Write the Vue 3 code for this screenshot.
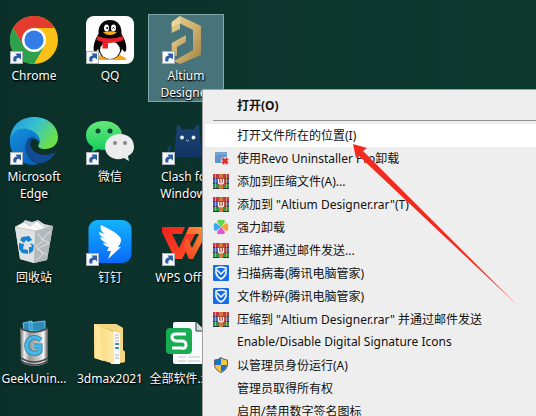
<script setup>
const shortcuts = [
  { icon: 'chrome', label: 'Chrome', linked: true },
  { icon: 'qq', label: 'QQ', linked: true },
  { icon: 'altium', label: 'Altium Designer', linked: true, selected: true },
  { icon: 'edge', label: 'Microsoft Edge', linked: true },
  { icon: 'wechat', label: '微信', linked: true },
  { icon: 'clash', label: 'Clash for Windows', linked: true },
  { icon: 'bin', label: '回收站' },
  { icon: 'ding', label: '钉钉', linked: true },
  { icon: 'wps', label: 'WPS Office', linked: true },
  { icon: 'geek', label: 'GeekUnin...' },
  { icon: 'folder', label: '3dmax2021' },
  { icon: 'sheet', label: '全部软件.xlsx' },
]

const commands = [
  { label: '打开文件所在的位置(I)', active: true },
  { label: '使用Revo Uninstaller Pro卸载', icon: 'revo' },
  { label: '添加到压缩文件(A)...', icon: 'rar' },
  { label: '添加到 "Altium Designer.rar"(T)', icon: 'rar' },
  { label: '强力卸载', icon: 'clover' },
  { label: '压缩并通过邮件发送...', icon: 'rar' },
  { label: '扫描病毒(腾讯电脑管家)', icon: 'guard' },
  { label: '文件粉碎(腾讯电脑管家)', icon: 'guard' },
  { label: '压缩到 "Altium Designer.rar" 并通过邮件发送', icon: 'rar' },
  { label: 'Enable/Disable Digital Signature Icons' },
  { label: '以管理员身份运行(A)', icon: 'shield' },
  { label: '管理员取得所有权' },
  { label: '启用/禁用数字签名图标' },
]
</script>

<template>
  <main class="desktop">
    <svg class="defs" aria-hidden="true">
      <defs>
        <linearGradient id="gold" x1="0" y1="0" x2="1" y2="1"><stop offset="0" stop-color="#e5cd8c" /><stop offset=".5" stop-color="#cfb170" /><stop offset="1" stop-color="#a08144" /></linearGradient>
        <linearGradient id="edgeTop" x1="0" y1="0" x2="1" y2=".5"><stop offset="0" stop-color="#2392d8" /><stop offset=".5" stop-color="#35bfd3" /><stop offset="1" stop-color="#6ae04c" /></linearGradient>
        <linearGradient id="edgeLeft" x1="0" y1="0" x2=".5" y2="1"><stop offset="0" stop-color="#1591de" /><stop offset="1" stop-color="#0966bd" /></linearGradient>
        <linearGradient id="wx" x2="0" y2="1"><stop offset="0" stop-color="#66e679" /><stop offset="1" stop-color="#12cf5c" /></linearGradient>
        <linearGradient id="cat" x2="0" y2="1"><stop offset="0" stop-color="#1c4476" /><stop offset="1" stop-color="#123463" /></linearGradient>
        <linearGradient id="dd" x2="0" y2="1"><stop offset="0" stop-color="#12b4fb" /><stop offset="1" stop-color="#0869fa" /></linearGradient>
        <linearGradient id="wpsA" x1="0" y1="0" x2="1" y2="1"><stop offset="0" stop-color="#f11f1e" /><stop offset="1" stop-color="#ff5425" /></linearGradient>
        <linearGradient id="wpsB" x1="1" y1="0" x2="0" y2="1"><stop offset="0" stop-color="#ff9a3d" /><stop offset="1" stop-color="#f23c20" /></linearGradient>
        <linearGradient id="metal"><stop offset="0" stop-color="#666" /><stop offset=".16" stop-color="#eee" /><stop offset=".34" stop-color="#999" /><stop offset=".68" stop-color="#ccc" /><stop offset=".84" stop-color="#f5f5f5" /><stop offset="1" stop-color="#555" /></linearGradient>
        <linearGradient id="fold"><stop offset="0" stop-color="#f5d678" /><stop offset="1" stop-color="#ffeaa5" /></linearGradient>
      </defs>
    </svg>

    <section class="icons" aria-label="Desktop">
      <button v-for="item in shortcuts" :key="item.icon" type="button" class="tile" :class="{ selected: item.selected }">
        <svg class="picture" viewBox="0 0 48 48" aria-hidden="true">
          <g v-if="item.icon === 'chrome'">
            <circle cx="24" cy="24" r="24" fill="#fbc116" />
            <path d="M24 24V12H44.8A24 24 0 0 0 3.2 12L13.6 30Z" fill="#e33b2e" />
            <path d="M3.2 12A24 24 0 0 0 24 48L34.4 30 24 24 13.6 30Z" fill="#2da14c" />
            <circle cx="24" cy="24" r="12" fill="#fff" /><circle cx="24" cy="24" r="9.6" fill="#347de9" />
          </g>
          <g v-else-if="item.icon === 'qq'">
            <rect width="48" height="48" rx="8" fill="#fff" />
            <path d="M14 39Q5 44 12 44H24V41ZM34 39Q45 44 37 44H24V41Z" fill="#f7a814" />
            <path d="M24 4C16 4 12 10 12.500 18C8 25 7 31 8 35Q9.500 37 12 33C14 40 18 43 24 43S34 40 36 33Q38.500 37 40 35C41 31 40 25 35.500 18C36 10 32 4 24 4Z" fill="#080808" />
            <ellipse cx="24" cy="34" rx="10" ry="9" fill="#fff" />
            <ellipse cx="20.500" cy="12" rx="2.500" ry="3.500" fill="#fff" /><ellipse cx="27.500" cy="12" rx="2.500" ry="3.500" fill="#fff" />
            <circle cx="21.200" cy="12" r="1" /><path d="M26.300 12.500Q27.500 10.500 28.700 12.500" stroke="#111" fill="none" />
            <path d="M17 16.500Q24 14 31 16.500Q24 21.500 17 16.500Z" fill="#f9ae15" />
            <path d="M11.500 20Q24 25 36.500 20L37.500 24Q30 27.500 22 27V32.500H16.500V26L10.500 24Z" fill="#eb2029" />
          </g>
          <g v-else-if="item.icon === 'altium'">
            <path d="M18 0L39 10V39L18 48L12 45L31 34V14L18 7.500V13L9.700 17V6Z" fill="url(#gold)" />
            <path d="M9.700 27L24 19V26L15 31V40H9.700Z" fill="url(#gold)" />
            <path d="M18 0V7.500L9.700 11V6Z" fill="#eedba2" opacity=".7" />
          </g>
          <g v-else-if="item.icon === 'edge'">
            <path d="M0 25C0 9 10 0 24 0C39 0 48 10 48 20C48 28 42 32 35 32C30 32 27 30 29 27C31 23 28 17 20 15C11 12 3 17 0 25Z" fill="url(#edgeTop)" />
            <path d="M0 25C1 15 9 10 17 12C26 14 31 20 29 26C27 18 16 21 16 31C16 39 21 45 29 47C14 51 0 40 0 25Z" fill="url(#edgeLeft)" />
            <path d="M18 22C10 33 20 48 33 46C39 44 43 40 45 36Q44 35 41 37C34 39 26 38 22 32C19 28 20 22 25 20Q21 19 18 22Z" fill="#124b93" />
          </g>
          <g v-else-if="item.icon === 'wechat'">
            <path d="M18 4C7 4 0 10 0 18C0 23 2 27 7 30L6 35L12 32Q15 33 20 33C29 32 36 26 36 18C36 10 28 4 18 4Z" fill="url(#wx)" />
            <circle cx="12" cy="14" r="2.500" fill="#0a4935" /><circle cx="24" cy="14" r="2.500" fill="#0a4935" />
            <path d="M34 17C25 17 19 23 19 30C19 38 26 43 35 42L38 41L43 44L42 39C46 37 48 34 48 30C48 22 42 17 34 17Z" fill="#ececec" />
            <circle cx="29" cy="26" r="2" fill="#888" /><circle cx="39" cy="26" r="2" fill="#888" />
          </g>
          <g v-else-if="item.icon === 'clash'">
            <path d="M12 39L15 9Q17 6 20 13Q26 11 32 13Q35 6 37 9L40 39Q39 40 37 40H13Z" fill="url(#cat)" />
            <path d="M13 37Q3 37 9 29" stroke="#173d6c" stroke-width="2.500" fill="none" />
            <circle cx="20" cy="20.500" r="1.900" fill="#e4f1fa" /><circle cx="31.500" cy="20.500" r="1.900" fill="#e4f1fa" />
            <path d="M24 23l1.500 1 1.500-1" stroke="#a9c5dc" fill="none" />
          </g>
          <g v-else-if="item.icon === 'bin'">
            <path d="M5 9L12 6L15 2L22 4L28 2L34 6L43 8L37 42L24 45L10 41Z" fill="#d8dbdd" />
            <path d="M5 9L25 13L24 45L10 41Z" fill="#dfe2e3" /><path d="M25 13L43 8L37 42L24 45Z" fill="#b4b9bc" />
            <path d="M5 9L14 4L20 8L27 3L34 9L42 8L26 13Z" fill="#fafafa" stroke="#aeb2b5" stroke-width=".6" />
            <path d="M12 6l5 5 6-5 5 5 6-5M41 13l-9 8 7 4-12 6 10 6M28 15l5 8-7 5 7 8-7 7" fill="none" stroke="#e8eaeb" opacity=".8" />
            <path d="M12 19L19 18L22 22L18 24L16 22L14 25L10 22ZM9 25L14 26L13 31L18 32V36L12 35L9 31ZM20 25L24 27L23 33L19 36V29H22Z" fill="#1784cf" />
          </g>
          <g v-else-if="item.icon === 'ding'">
            <rect x="2.500" y="2" width="43" height="43" rx="9" fill="url(#dd)" />
            <path d="M15 7Q30 14 34 19Q36 22 34 26L32 29H35L22 41L25 33H21L23 29Q18 28 17 25L22 26Q15 23 14 19L20 21Q13 18 13 14L19 16Q13 12 15 7Z" fill="#fff" />
          </g>
          <g v-else-if="item.icon === 'wps'">
            <path d="M0 9H23L20 16H10L17 30L27 9H37L20 41H13L0 14Z" fill="url(#wpsA)" />
            <path d="M27 9H48L31 41H27L21 28L25 20L30 30L37 16H24Z" fill="url(#wpsB)" />
          </g>
          <g v-else-if="item.icon === 'geek'">
            <path d="M13 4L32 0L35 3V14H13Z" fill="#172a36" /><path d="M13 4L22 2V12H14ZM19 4L35 2V12H20Z" fill="#2e8bb8" stroke="#65c9ee" />
            <path d="M10 9Q24 17 38 9V43Q24 51 11 43Z" fill="url(#metal)" />
            <path d="M10 9Q24 17 38 9M11 39Q24 47 38 39M11 42Q24 50 38 42" fill="none" stroke="#454545" stroke-width="1.500" />
            <path d="M31 21Q24 16 18.500 21C15 26 17 33 22 34Q28 35 30 32V27H24" fill="none" stroke="#257aa2" stroke-width="5" /><path d="M31 21Q24 16 18.500 21C15 26 17 33 22 34Q28 35 30 32V27H24" fill="none" stroke="#49b7e6" stroke-width="3.500" />
          </g>
          <g v-else-if="item.icon === 'folder'">
            <path d="M8 5L30 5L37 9V31L39 33V43L28 44L8 39Z" fill="#e6c36b" />
            <path d="M8 5L30 5L37 9V31L39 33V43L34 44V14L26 11Z" fill="#f3d783" />
            <path d="M27 12L34 14V45H25Z" fill="#f9f9f9" /><path d="M29 16h4m-4 3h4m-4 3h4m-4 14h4m-4 3h4" stroke="#adb5bb" /><path d="M29 25h4m-4 4h4" stroke="#3e91b4" stroke-width="2" />
            <path d="M8 5L25 12L28 16V45L9 39Z" fill="url(#fold)" /><path d="M8 5L14 7L17 42L9 39Z" fill="#ffe69b" />
          </g>
          <g v-else-if="item.icon === 'sheet'">
            <path d="M13 3H34L43 12V43Q43 45 41 45H13Q11 45 11 43V5Q11 3 13 3Z" fill="#f8fafb" /><path d="M34 3V12H43" fill="#d6dadd" stroke="#183d33" />
            <path d="M16 38h8m2 0h12M16 42h8m2 0h12" stroke="#dce1e4" stroke-width="2" />
            <rect x="4" y="9" width="26" height="26" rx="4" fill="#19ad53" />
            <path d="M24 15H14Q10 15 10 18T14 22H20Q24 22 24 26T20 29H10" fill="none" stroke="#fff" stroke-width="3" />
          </g>
          <g v-if="item.linked">
            <rect x=".5" y="35.500" width="12" height="12" fill="#f5f7f9" stroke="#a9b1b6" />
            <path d="M3.500 45.500Q2 40 7 39.500L5.500 37.500H11V43.500L9 41.700Q5.500 42 6.500 45.500Z" fill="#2d5da4" />
          </g>
        </svg>
        <span class="label">{{ item.label }}</span>
      </button>
    </section>

    <nav class="menu" aria-label="Context menu">
      <button type="button" class="command primary"><span class="slot"></span>打开(O)</button>
      <hr class="rule" />
      <button v-for="item in commands" :key="item.label" type="button" class="command" :class="{ active: item.active }">
        <span class="slot">
          <svg v-if="item.icon" viewBox="0 0 16 16" width="16" height="16" aria-hidden="true">
            <g v-if="item.icon === 'revo'">
              <path d="M2 2H14V6L11 13H2Z" fill="#5f93c9" /><path d="M2 2H14V5H2Z" fill="#76a5d3" /><rect x="8" y="7" width="8" height="8" rx="3" fill="#f3d4d2" /><path d="M9.500 8.500l5 5m0-5l-5 5" stroke="#d9302d" stroke-width="2.500" />
            </g>
            <g v-else-if="item.icon === 'rar'">
              <rect y="1" width="16" height="5" fill="#c03a42" /><rect y="6" width="16" height="4" fill="#4f60bd" /><rect y="11" width="16" height="4" fill="#2f9448" />
              <path d="M0 5.500h16M0 10.500h16M0 15.500h16" stroke="#343247" /><path d="M2.500 1v14M13.500 1v14" stroke="#e0b878" stroke-width=".7" />
              <rect x="6" y="1" width="4" height="15" fill="#cf7a3b" /><rect x="4" y="5" width="8" height="7" fill="#b5473c" />
              <path d="M5.500 6v3q0 2 2.500 2t2.500-2V6M8 6v4" fill="none" stroke="#fff" stroke-width="1.200" />
            </g>
            <g v-else-if="item.icon === 'clover'">
              <path d="M8 8L4 3Q4 0 8 1Q12 0 12 3Z" fill="#61d548" /><path d="M8 8L3 12Q0 11 1 8Q0 4 3 4Z" fill="#3da9ec" /><path d="M8 8L13 4Q16 5 15 8Q16 12 13 12Z" fill="#f7a13b" /><path d="M8 8L12 13Q12 16 8 15Q4 16 4 13Z" fill="#dd58cc" />
            </g>
            <g v-else-if="item.icon === 'guard'">
              <rect width="16" height="16" rx="1" fill="#176ce8" /><path d="M3 3Q8 1 13 3V8Q12 12 8 14Q4 12 3 8Z" fill="none" stroke="#fff" stroke-width="1.500" /><path d="M4 5l4 4 4-4" fill="none" stroke="#fff" stroke-width="1.500" />
            </g>
            <g v-else>
              <path d="M8 .5Q5 3 1.500 3V7C1.500 11 4 14 8 15.500C12 14 14.500 11 14.500 7V3Q11 3 8 .5Z" fill="#f4c541" />
              <path d="M8 1Q5 3 2 3V8H8ZM8 8H14Q13 13 8 15Z" fill="#1770c9" /><path d="M8 .5Q5 3 1.500 3V7C1.500 11 4 14 8 15.500C12 14 14.500 11 14.500 7V3Q11 3 8 .5Z" fill="none" stroke="#596066" />
            </g>
          </svg>
        </span>{{ item.label }}
      </button>
    </nav>

    <svg class="pointer" viewBox="0 0 164 160" aria-hidden="true"><path d="M0 0L14 4L10 7L163 160L6 12L3 14Z" fill="#f52a1c" /></svg>
  </main>
</template>

<style>
body { margin: 0; }
</style>

<style scoped>
.desktop {
  position: relative;
  height: 100vh;
  overflow: hidden;
  background: linear-gradient(90deg, #0b3029, #0d392f);
  font-family: "Noto Sans", "Noto Sans CJK SC", sans-serif;
  font-size: 12px;
}
.defs { position: absolute; width: 0; height: 0; }
button { margin: 0; border: 0; background: none; font: inherit; cursor: default; }
.icons {
  display: grid;
  grid-template-columns: repeat(3, 76px);
  grid-auto-rows: 88px;
  row-gap: 13px;
  padding-top: 14px;
  margin-left: -4px;
}
.tile {
  display: flex;
  flex-direction: column;
  align-items: center;
  justify-content: flex-start;
  gap: 3px;
  padding: 1px 0;
  border: 1px solid transparent;
  color: #fff;
  line-height: 17px;
  text-shadow: 1px 1px 2px #000, 0 1px 1px #000;
}
.selected { border-color: #82a8ae; background: #47737b; }
.picture { flex: none; width: 48px; height: 48px; }
.menu {
  position: absolute;
  top: 89px;
  left: 202px;
  right: -4px;
  padding: 4px 2px;
  border: 1px solid #a0a0a0;
  background: #eee;
}
.command {
  display: flex;
  align-items: center;
  width: 100%;
  height: 23px;
  padding: 0 8px 2px;
  color: #111;
  white-space: nowrap;
}
.primary { font-weight: 700; }
.active { background: #fff; }
.slot { display: flex; flex: none; width: 24px; }
.rule { height: 1px; margin: 3px 0 3px 8px; border: 0; background: #919191; }
.pointer { position: absolute; top: 144px; left: 353px; width: 164px; height: 160px; pointer-events: none; }
</style>
